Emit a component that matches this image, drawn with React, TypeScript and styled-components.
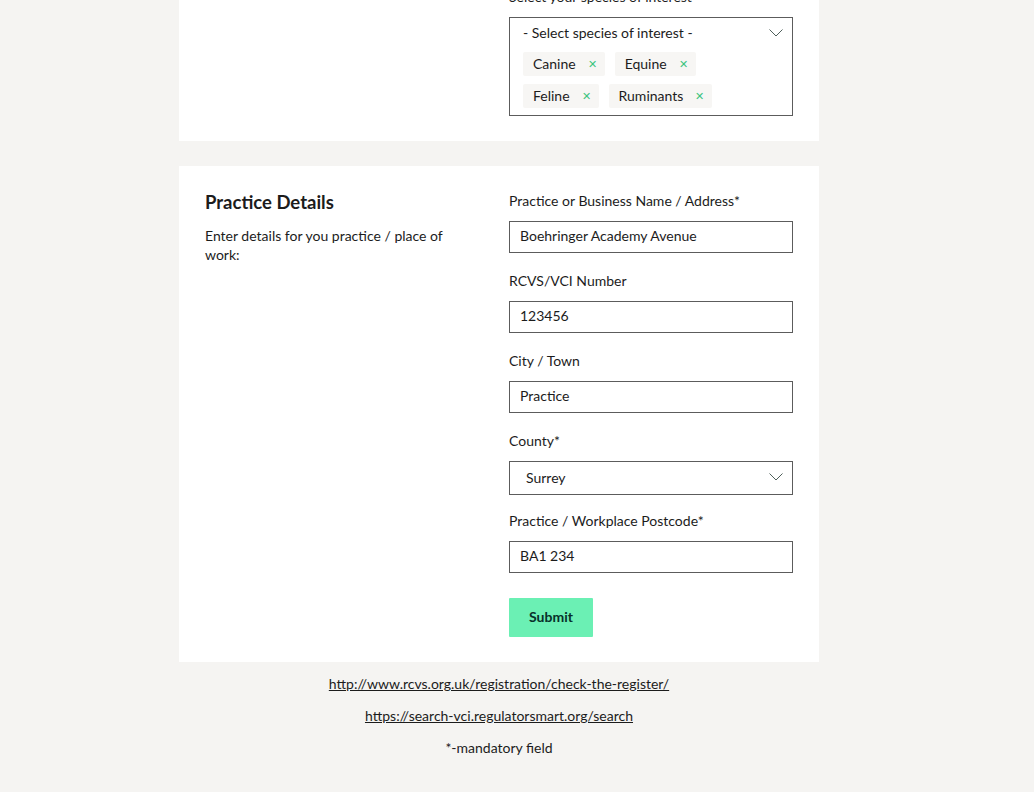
import React from "react";
import styled, { createGlobalStyle } from "styled-components";

const Global = createGlobalStyle`
  html, body { margin: 0; padding: 0; background: #f5f4f2; }
  body { font-family: Lato, "Liberation Sans", Arial, sans-serif; color: #08312a; }
  * { box-sizing: border-box; }
`;

const Page = styled.div`
  width: 640px;
  margin: -38px 0 0 179px;
  display: flex;
  flex-direction: column;
  gap: 25px;
`;

const Card = styled.section`
  background: #ffffff;
  padding: 25px 26px;
  display: grid;
  grid-template-columns: 250px 284px;
  column-gap: 54px;
`;

const Intro = styled.div`
  display: flex;
  flex-direction: column;
  gap: 13px;
`;

const Heading = styled.h2`
  margin: 0;
  font-size: 18.5px;
  line-height: 22px;
  font-weight: 700;
  color: #1c1c1c;
`;

const Lead = styled.p`
  margin: 0;
  font-size: 14px;
  line-height: 19px;
  color: #1c1c1c;
`;

const Fields = styled.div`
  display: flex;
  flex-direction: column;
`;

const Field = styled.div<{ $gap?: number }>`
  display: flex;
  flex-direction: column;
  gap: 10px;
  margin-bottom: ${(p) => p.$gap ?? 18}px;
`;

const Label = styled.label`
  font-size: 14px;
  line-height: 20px;
  color: #1c1c1c;
`;

const Input = styled.div`
  height: 32px;
  border: 1px solid #5c5c5c;
  padding: 0 10px 3px;
  display: flex;
  align-items: center;
  font-size: 14px;
  color: #1c1c1c;
  background: #fff;
`;

const Select = styled(Input)`
  height: 34px;
  padding: 0 9px 2px 16px;
  justify-content: space-between;
`;

const Multi = styled.div`
  border: 1px solid #5c5c5c;
  padding: 5px 9px 4px 13px;
  height: 99px;
  display: flex;
  flex-direction: column;
  gap: 9px;
`;

const MultiHead = styled.div`
  display: flex;
  justify-content: space-between;
  align-items: center;
  font-size: 14px;
  line-height: 20px;
  color: #1c1c1c;
`;

const Chips = styled.div`
  display: flex;
  flex-wrap: wrap;
  gap: 8px 10px;
  width: 200px;
`;

const Chip = styled.span`
  height: 24px;
  background: #f7f6f4;
  border-radius: 2px;
  padding: 0 8px 1px 10px;
  display: inline-flex;
  align-items: center;
  gap: 12px;
  font-size: 14px;
  color: #1c1c1c;
`;

const ChipX = styled.span`
  color: #3cc47f;
  font-size: 11px;
  line-height: 1;
`;

const Submit = styled.button`
  margin-top: 7px;
  width: 84px;
  height: 39px;
  border: none;
  border-radius: 1px;
  padding: 0 0 3px;
  background: #6bf0b4;
  color: #08312a;
  font-family: inherit;
  font-size: 14px;
  font-weight: 700;
`;

const Footer = styled.div`
  margin-top: -13px;
  display: flex;
  flex-direction: column;
  align-items: center;
  gap: 12px;
  font-size: 14px;
  line-height: 20px;
  color: #1c1c1c;
`;

const Link = styled.a`
  color: #1c1c1c;
  text-decoration: underline;
`;

const Chevron = () => (
  <svg width="14" height="8" viewBox="0 0 14 8" fill="none">
    <path d="M0.5 0.5 L7 7 L13.5 0.5" stroke="#4f605b" strokeWidth="1" />
  </svg>
);

const species = ["Canine", "Equine", "Feline", "Ruminants"];

export default function App() {
  return (
    <>
      <Global />
      <Page>
        <Card>
          <div />
          <Fields>
            <Field $gap={0}>
              <Label>Select your species of interest</Label>
              <Multi>
                <MultiHead>
                  - Select species of interest -
                  <Chevron />
                </MultiHead>
                <Chips>
                  {species.map((s) => (
                    <Chip key={s}>
                      {s}
                      <ChipX>✕</ChipX>
                    </Chip>
                  ))}
                </Chips>
              </Multi>
            </Field>
          </Fields>
        </Card>
        <Card>
          <Intro>
            <Heading>Practice Details</Heading>
            <Lead>Enter details for you practice / place of work:</Lead>
          </Intro>
          <Fields>
            <Field>
              <Label>Practice or Business Name / Address*</Label>
              <Input>Boehringer Academy Avenue</Input>
            </Field>
            <Field>
              <Label>RCVS/VCI Number</Label>
              <Input>123456</Input>
            </Field>
            <Field>
              <Label>City / Town</Label>
              <Input>Practice</Input>
            </Field>
            <Field $gap={16}>
              <Label>County*</Label>
              <Select>
                Surrey
                <Chevron />
              </Select>
            </Field>
            <Field $gap={18}>
              <Label>Practice / Workplace Postcode*</Label>
              <Input>BA1 234</Input>
            </Field>
            <div>
              <Submit>Submit</Submit>
            </div>
          </Fields>
        </Card>
        <Footer>
          <Link href="#">http://www.rcvs.org.uk/registration/check-the-register/</Link>
          <Link href="#">https://search-vci.regulatorsmart.org/search</Link>
          <span>*-mandatory field</span>
        </Footer>
      </Page>
    </>
  );
}
